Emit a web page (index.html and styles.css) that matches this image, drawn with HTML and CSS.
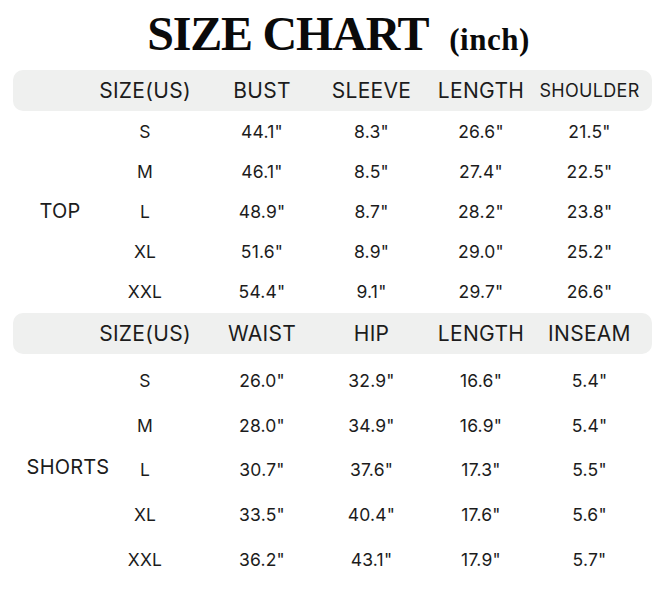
FILE: index.html
```html
<!DOCTYPE html>
<html lang="en">
<head>
<meta charset="utf-8">
<title>Size Chart</title>
<link rel="stylesheet" href="styles.css">
</head>
<body>
<div class="page">
  <h1 class="title"><span class="title-main">SIZE CHART</span><span class="title-unit">(inch)</span></h1>

  <section class="section top">
    <div class="band grid">
      <div></div>
      <div class="size">SIZE(US)</div>
      <div>BUST</div>
      <div>SLEEVE</div>
      <div>LENGTH</div>
      <div class="small">SHOULDER</div>
    </div>
    <div class="body grid">
      <div class="label label-top">TOP</div>
      <div class="size">S</div><div>44.1"</div><div>8.3"</div><div>26.6"</div><div>21.5"</div>
      <div class="size">M</div><div>46.1"</div><div>8.5"</div><div>27.4"</div><div>22.5"</div>
      <div class="size">L</div><div>48.9"</div><div>8.7"</div><div>28.2"</div><div>23.8"</div>
      <div class="size">XL</div><div>51.6"</div><div>8.9"</div><div>29.0"</div><div>25.2"</div>
      <div class="size">XXL</div><div>54.4"</div><div>9.1"</div><div>29.7"</div><div>26.6"</div>
    </div>
  </section>

  <section class="section shorts">
    <div class="band grid">
      <div></div>
      <div class="size">SIZE(US)</div>
      <div>WAIST</div>
      <div>HIP</div>
      <div>LENGTH</div>
      <div>INSEAM</div>
    </div>
    <div class="body grid">
      <div class="label label-shorts">SHORTS</div>
      <div class="size">S</div><div>26.0"</div><div>32.9"</div><div>16.6"</div><div>5.4"</div>
      <div class="size">M</div><div>28.0"</div><div>34.9"</div><div>16.9"</div><div>5.4"</div>
      <div class="size">L</div><div>30.7"</div><div>37.6"</div><div>17.3"</div><div>5.5"</div>
      <div class="size">XL</div><div>33.5"</div><div>40.4"</div><div>17.6"</div><div>5.6"</div>
      <div class="size">XXL</div><div>36.2"</div><div>43.1"</div><div>17.9"</div><div>5.7"</div>
    </div>
  </section>
</div>
</body>
</html>
```

FILE: styles.css
```css
* { box-sizing: border-box; }

html, body {
  margin: 0;
  padding: 0;
  background: #ffffff;
}

.page {
  width: 669px;
  height: 600px;
  padding: 9px 17px 0 13px;
  font-family: "Inter", "Liberation Sans", sans-serif;
  color: #1c1c1c;
  overflow: hidden;
}

.title {
  margin: 0 0 11px;
  display: flex;
  justify-content: center;
  align-items: baseline;
  gap: 21px;
  font-family: "Liberation Serif", serif;
  font-weight: 700;
  line-height: 50px;
  height: 50px;
  color: #0a0a0a;
  padding-left: 12px;
}

.title-main {
  font-size: 48px;
  letter-spacing: -1.2px;
}

.title-unit {
  font-size: 31px;
  letter-spacing: 0.5px;
}

.grid {
  display: grid;
  grid-template-columns: 98px 96px 110px 109px 110px 107px;
  text-align: center;
  align-items: center;
}

.band {
  height: 41px;
  background: #eff0ef;
  border-radius: 10px;
  font-size: 21px;
  font-weight: 400;
  letter-spacing: 0.3px;
}

.band .small {
  font-size: 18px;
}

.size {
  display: flex;
  justify-content: center;
  padding-right: 28px;
  white-space: nowrap;
}

.body {
  font-size: 17.5px;
  letter-spacing: 0.2px;
}

.top .body {
  grid-template-rows: repeat(5, 40px);
  margin-bottom: 2px;
}

.shorts .body {
  padding-top: 4px;
  grid-template-rows: repeat(5, 44.8px);
}

.label {
  grid-row: 1 / span 5;
  font-size: 20px;
}

.label-shorts {
  padding-left: 12px;
  padding-bottom: 5px;
}

.label-top {
  padding-left: 0;
  padding-right: 4px;
}
```
